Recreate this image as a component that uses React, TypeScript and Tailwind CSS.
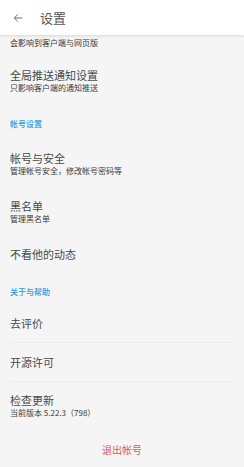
import React from "react";

const font = { fontFamily: '"Noto Sans CJK SC", "Noto Sans", sans-serif' };

function Item({ title, sub, h }: { title: string; sub?: string; h: string }) {
  return (
    <div className={`flex flex-col justify-center px-[10px] ${h}`}>
      <div className="text-[11px] leading-[14px] text-[#4a4a4a]">{title}</div>
      {sub && <div className="text-[8px] leading-[11px] text-[#3a3a3a]">{sub}</div>}
    </div>
  );
}

function Section({ title, h }: { title: string; h: string }) {
  return (
    <div className={`flex items-center px-[10px] ${h}`}>
      <div className="text-[8px] leading-[11px] text-[#2a98e8] font-medium">{title}</div>
    </div>
  );
}

function Divider() {
  return <div className="mx-[10px] h-px bg-[#ececec]" />;
}

export default function App() {
  return (
    <div className="w-[244px] h-[467px] bg-[#f5f5f5] overflow-hidden relative" style={font}>
      <div className="h-[35px] bg-white flex items-center shadow-[0_1px_3px_rgba(0,0,0,0.12)] relative z-10">
        <svg width="10" height="10" viewBox="0 0 24 24" className="ml-[13px]" fill="none" stroke="#666" strokeWidth="2.2" strokeLinecap="square">
          <path d="M21 12H4M11 4l-8 8 8 8" />
        </svg>
        <div className="ml-[17px] text-[13px] text-[#555]">设置</div>
      </div>
      <div className="h-[14px] flex items-center px-[10px]">
        <div className="text-[8px] leading-[11px] text-[#3a3a3a]">会影响到客户端与网页版</div>
      </div>
      <Item h="h-[63px]" title="全局推送通知设置" sub="只影响客户端的通知推送" />
      <Section h="h-[22px]" title="帐号设置" />
      <Item h="h-[59px]" title="帐号与安全" sub="管理帐号安全，修改帐号密码等" />
      <Item h="h-[37px]" title="黑名单" sub="管理黑名单" />
      <Item h="h-[48px]" title="不看他的动态" />
      <Section h="h-[26px]" title="关于与帮助" />
      <Item h="h-[38px]" title="去评价" />
      <Divider />
      <Item h="h-[38px]" title="开源许可" />
      <Divider />
      <Item h="h-[47px]" title="检查更新" sub="当前版本 5.22.3（798）" />
      <div className="h-[40px] flex items-center justify-center">
        <div className="text-[10px] text-[#e05a5a]">退出帐号</div>
      </div>
    </div>
  );
}
